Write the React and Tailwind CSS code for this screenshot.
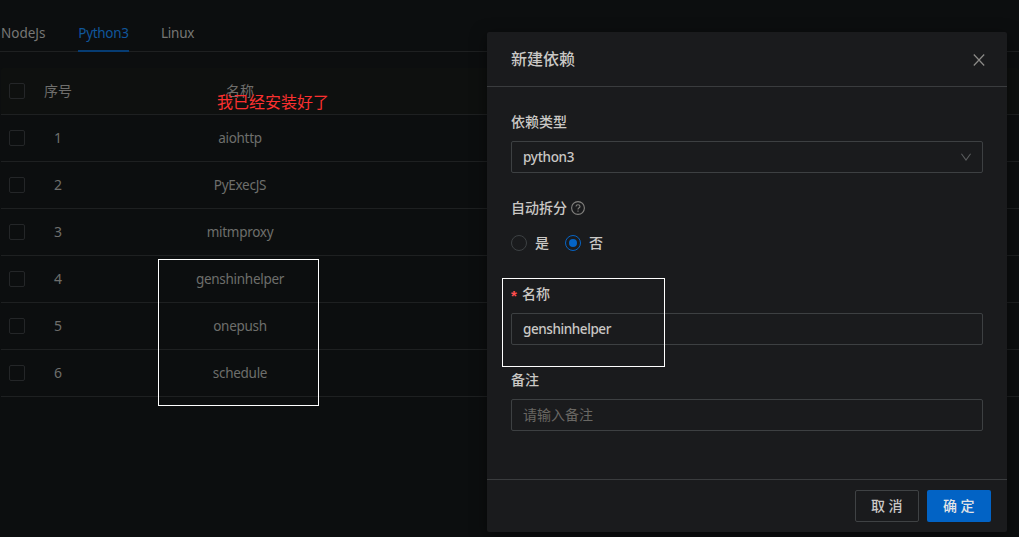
import React from "react";

const tabs = ["NodeJs", "Python3", "Linux"];
const rows = ["aiohttp", "PyExecJS", "mitmproxy", "genshinhelper", "onepush", "schedule"];

function Checkbox() {
  return <span className="block size-4 rounded-[2px] border border-[#242628]" />;
}

function Row({ index, name, header }) {
  return (
    <div
      className={
        "flex h-[47px] items-center border-b border-[#1e2021] pl-2 text-[#6e6e6c] " +
        (header ? "rounded-t-[2px] bg-[#0e100f]" : "")
      }
    >
      <Checkbox />
      <span className="ml-[8px] w-[50px] pb-0.5 text-center">{index}</span>
      {header ? (
        <span className="ml-[57px] w-[200px] pb-0.5 text-center">{name}</span>
      ) : (
        <span className="ml-[57px] w-[200px] text-center text-[13.5px] tracking-[-0.28px]">{name}</span>
      )}
    </div>
  );
}

function Label({ children }) {
  return <div className="mb-2 flex h-[22px] items-center font-medium leading-[22px]">{children}</div>;
}

function Radio({ checked, children }) {
  return (
    <span className="flex items-center gap-2">
      <span
        className={
          "flex size-4 items-center justify-center rounded-full border " +
          (checked ? "border-[#0764c4]" : "border-[#3d4143]")
        }
      >
        {checked && <span className="size-2 rounded-full bg-[#0464c6]" />}
      </span>
      <span className="pb-0.5 font-medium">{children}</span>
    </span>
  );
}

const box = "flex h-8 items-center rounded-[2px] border border-[#3d4042] px-[11px] leading-none";

function Dialog() {
  return (
    <div className="absolute left-[487px] top-8 flex h-[500px] w-[520px] flex-col rounded-[2px] bg-[#1a1b1d] text-[#cac8c5] shadow-[0_4px_16px_rgba(0,0,0,0.5)]">
      <header className="flex h-[55px] items-center justify-between border-b border-[#3a3c3e] pl-6 pr-[22px]">
        <h1 className="text-base font-medium">新建依赖</h1>
        <svg className="mt-0.5 size-3" viewBox="0 0 12 12" fill="none" stroke="#8c8b88" strokeWidth="1.2">
          <path d="M.8.5l10.4 11M11.2.5L.8 11.5" />
        </svg>
      </header>
      <main className="flex grow flex-col gap-6 p-6">
        <section>
          <Label>依赖类型</Label>
          <div className={box + " justify-between"}>
            <span className="pt-0.5 text-[13.5px] font-medium tracking-[-0.3px]">python3</span>
            <svg className="h-2 w-2.5" viewBox="0 0 10 8" fill="none" stroke="#5b5d5e" strokeWidth="1.1">
              <path d="M.4.7L5 7 9.6.7" />
            </svg>
          </div>
        </section>
        <section>
          <Label>
            自动拆分
            <svg className="ml-1 size-3.5" viewBox="0 0 14 14" fill="none" stroke="#82817e" strokeWidth="1.1">
              <circle cx="7" cy="7" r="6.4" />
              <path d="M5 5.5c0-1.1.9-1.8 2-1.8s2 .7 2 1.8c0 1.3-2 1.3-2 2.9" />
              <path d="M7 9.5v1.2" />
            </svg>
          </Label>
          <div className="flex h-8 items-center gap-4">
            <Radio>是</Radio>
            <Radio checked>否</Radio>
          </div>
        </section>
        <section>
          <Label>
            <span className="mr-1 w-[7px] pt-[3px] font-['Liberation_Sans'] text-[15px] font-bold text-[#ff4d4f]">*</span>
            名称
          </Label>
          <div className={box}>
            <span className="pt-0.5 text-[13.5px] font-medium tracking-[-0.42px]">genshinhelper</span>
          </div>
        </section>
        <section>
          <Label>备注</Label>
          <div className={box + " text-[#696763]"}>请输入备注</div>
        </section>
      </main>
      <footer className="flex h-[53px] items-center justify-end gap-2 border-t border-[#3a3c3e] px-4">
        <button className="h-8 w-16 rounded-[2px] border border-[#3f4244] pb-0.5 pl-[3px] font-medium tracking-[3.5px]">取消</button>
        <button className="h-8 w-16 rounded-[2px] bg-[#0263c5] pb-0.5 pl-[3px] font-medium tracking-[3.5px] text-[#e4e5e7]">确定</button>
      </footer>
    </div>
  );
}

export default function App() {
  return (
    <div className="relative h-[537px] w-[1019px] overflow-hidden bg-[#0c0e0f] font-['Noto_Sans','Noto_Sans_CJK_SC',sans-serif] text-[14px]">
      <nav className="mt-[15px] flex h-[37px] gap-8 border-b border-[#1e2021] pl-px text-[#777775]">
        {tabs.map((tab) => (
          <span
            key={tab}
            className={
              "-mb-px flex h-[37px] items-center pt-0.5 text-[13.5px] " +
              (tab === "Python3"
                ? "w-[51px] justify-center border-b-2 border-[#063c73] tracking-[-0.3px] text-[#10569b]"
                : "w-[45px] border-b-2 border-transparent") +
              (tab === "Linux" ? " tracking-[-0.25px]" : "")
            }
          >
            {tab}
          </span>
        ))}
      </nav>
      <div className="ml-px mt-4">
        <Row header index="序号" name="名称" />
        {rows.map((name, i) => (
          <Row key={name} index={i + 1} name={name} />
        ))}
      </div>
      <span className="absolute left-[217px] top-[90px] whitespace-nowrap text-base leading-6 text-[#fb3030]">我已经安装好了</span>
      <div className="absolute left-[158px] top-[259px] h-[147px] w-[161px] border border-white" />
      <Dialog />
      <div className="absolute left-[502px] top-[278px] h-[89px] w-[163px] border border-white" />
    </div>
  );
}
